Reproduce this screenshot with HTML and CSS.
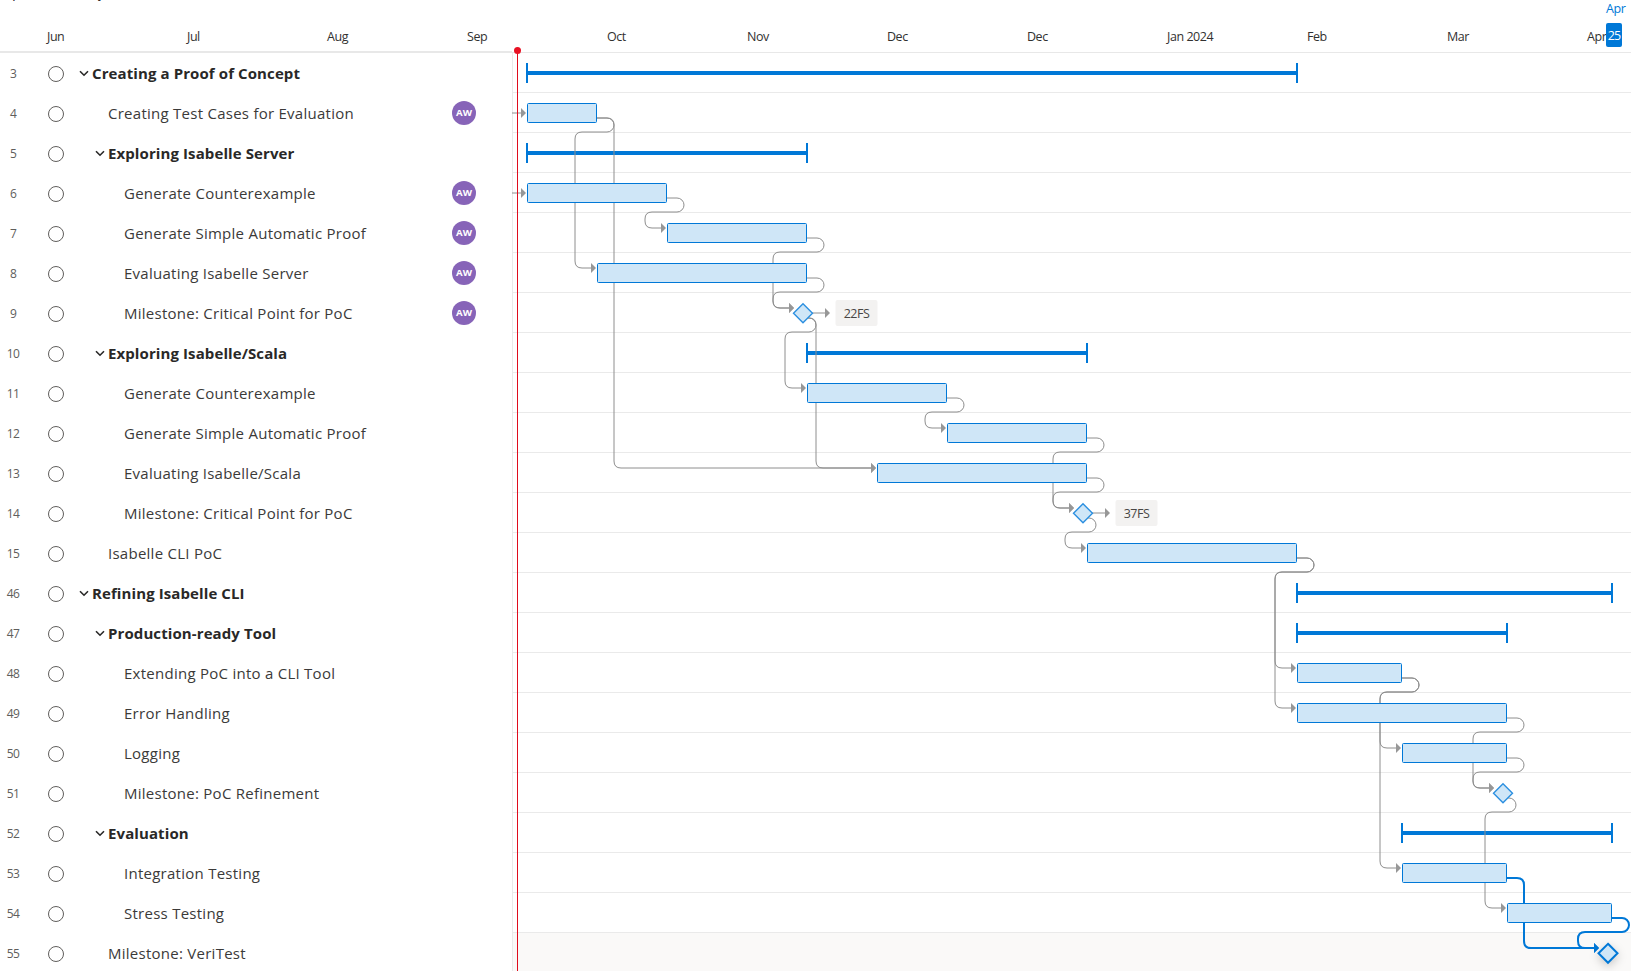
FILE: index.html
```html
<!DOCTYPE html>
<html lang="en">
<head>
<meta charset="utf-8">
<title>Project timeline</title>
<link rel="stylesheet" href="styles.css">
</head>
<body>
<div class="app">
  <header class="axis">
    <span class="clipped">p</span><span class="clipped second">p</span>
    <span class="month">Jun</span><span class="month">Jul</span><span class="month">Aug</span><span class="month">Sep</span><span class="month">Oct</span><span class="month">Nov</span><span class="month">Dec</span><span class="month">Dec</span><span class="month">Jan 2024</span><span class="month">Feb</span><span class="month">Mar</span><span class="month">Apr</span>
    <span class="marker-month">Apr</span><span class="marker-day">25</span>
  </header>
  <main class="board">
    <section class="tasks" id="tasks"></section>
    <section class="chart">
      <svg class="gantt" id="gantt" width="1119" height="918" viewBox="512 53 1119 918"></svg>
    </section>
  </main>
  <div class="today"></div>
</div>
<script src="app.js"></script>
</body>
</html>
```
FILE: styles.css
```css
* { box-sizing: border-box; }
body { margin: 0; background: #fff; color: #323130; font-family: "Open Sans", "Noto Sans", sans-serif; }
.app { position: relative; width: 1631px; height: 971px; overflow: hidden; display: flex; flex-direction: column; }
.axis { position: relative; flex: none; display: flex; align-items: flex-end; height: 53px; padding: 0 0 5px 47px; border-bottom: 1px solid #e8e8e8; overflow: hidden; }
.axis::after { content: ""; position: absolute; left: 0; bottom: 0; width: 512px; height: 1px; background: #e8e8e8; }
.month { flex: 0 0 140px; font-size: 12.5px; line-height: 20px; letter-spacing: -0.45px; color: #323130; white-space: nowrap; }
.clipped { position: absolute; left: 12px; top: -19px; font-size: 15px; line-height: 20px; }
.clipped.second { left: 97px; top: -18px; font-weight: 700; }
.marker-month { position: absolute; left: 1606px; top: -1px; font-size: 12.5px; line-height: 19px; letter-spacing: -0.4px; color: #0078d7; }
.marker-day { position: absolute; left: 1606px; top: 23px; width: 16px; height: 24px; border-radius: 2px; background: #0078d7; color: #fff; font-size: 12.5px; line-height: 25px; letter-spacing: -0.9px; text-align: center; }
.board { flex: 1; display: flex; min-height: 0; }
.tasks { flex: 0 0 512px; }
.chart { flex: 1; }
.gantt { display: block; }
.row { display: flex; align-items: center; height: 40px; padding-top: 2px; }
.num { flex: 0 0 26px; margin-top: -2px; text-align: center; font-size: 12px; letter-spacing: -0.7px; color: #605e5c; }
.check { flex: none; width: 16px; height: 16px; margin-left: 22px; border: 1px solid #605e5c; border-radius: 50%; }
.name { flex: 1; display: flex; align-items: center; margin-top: -2px; font-size: 15px; line-height: 20px; letter-spacing: 0.26px; white-space: nowrap; color: #3b3a39; }
.name svg { flex: none; width: 10px; height: 7px; margin: 0 3px 0 0; }
.l1 { padding-left: 28px; }
.l2 { padding-left: 44px; }
.l3 { padding-left: 60px; }
.summary { font-weight: 700; color: #292827; letter-spacing: 0.1px; }
.summary.l1 { padding-left: 15px; }
.summary.l2 { padding-left: 31px; }
.avatar { flex: none; width: 24px; height: 24px; margin: -2px 36px 0 0; border-radius: 50%; background: #8764b8; color: #fff; font-size: 9.6px; font-weight: 700; line-height: 24px; text-align: center; }
.today { position: absolute; left: 517px; top: 50px; width: 1px; bottom: 0; background: #e00b1c; }
.today::before { content: ""; position: absolute; left: -3px; top: -3px; width: 7px; height: 7px; border-radius: 50%; background: #e81123; }
.grid { stroke: #eaeaea; }
.selected-row { fill: #faf9f8; }
.bar { fill: #cfe6f7; stroke: #0078d7; }
.span { fill: #0078d7; }
.link { fill: none; stroke: #8e8e8e; }
.head { fill: #979797; }
.link.active { stroke: #0078d7; stroke-width: 2; }
.head.active { fill: #0078d7; }
.milestone { fill: #cfe6f7; stroke: #2b8fe0; stroke-width: 1.4; }
.milestone.active { stroke: #0078d7; stroke-width: 2; filter: drop-shadow(0 3px 5px rgba(0, 0, 0, 0.2)); }
.lag { fill: #f3f2f1; }
.lag-text { fill: #484644; font-size: 12.5px; text-anchor: middle; letter-spacing: -0.5px; }
```
FILE: app.js
```js
// Each row: number, name, indent level, is summary, has assignee
const rows = [
  [3, "Creating a Proof of Concept", 1, 1, 0],
  [4, "Creating Test Cases for Evaluation", 2, 0, 1],
  [5, "Exploring Isabelle Server", 2, 1, 0],
  [6, "Generate Counterexample", 3, 0, 1],
  [7, "Generate Simple Automatic Proof", 3, 0, 1],
  [8, "Evaluating Isabelle Server", 3, 0, 1],
  [9, "Milestone: Critical Point for PoC", 3, 0, 1],
  [10, "Exploring Isabelle/Scala", 2, 1, 0],
  [11, "Generate Counterexample", 3, 0, 0],
  [12, "Generate Simple Automatic Proof", 3, 0, 0],
  [13, "Evaluating Isabelle/Scala", 3, 0, 0],
  [14, "Milestone: Critical Point for PoC", 3, 0, 0],
  [15, "Isabelle CLI PoC", 2, 0, 0],
  [46, "Refining Isabelle CLI", 1, 1, 0],
  [47, "Production-ready Tool", 2, 1, 0],
  [48, "Extending PoC into a CLI Tool", 3, 0, 0],
  [49, "Error Handling", 3, 0, 0],
  [50, "Logging", 3, 0, 0],
  [51, "Milestone: PoC Refinement", 3, 0, 0],
  [52, "Evaluation", 2, 1, 0],
  [53, "Integration Testing", 3, 0, 0],
  [54, "Stress Testing", 3, 0, 0],
  [55, "Milestone: VeriTest", 2, 0, 0]
];
const chevron = '<svg viewBox="0 0 10 7"><path d="M1 1.2 5 5.2 9 1.2" fill="none" stroke="#292827" stroke-width="1.6"/></svg>';
document.getElementById("tasks").innerHTML = rows.map(([n, name, level, summary, who]) =>
  `<div class="row"><span class="num">${n}</span><span class="check"></span>` +
  `<span class="name l${level}${summary ? " summary" : ""}">${summary ? chevron : ""}<span>${name}</span></span>` +
  `${who ? '<span class="avatar">AW</span>' : ""}</div>`).join("");

const rowY = n => 53 + 40 * rows.findIndex(r => r[0] === n);
const bars = { 4: [527, 597], 6: [527, 667], 7: [667, 807], 8: [597, 807], 11: [807, 947], 12: [947, 1087], 13: [877, 1087], 15: [1087, 1297], 48: [1297, 1402], 49: [1297, 1507], 50: [1402, 1507], 53: [1402, 1507], 54: [1507, 1612] };
const spans = { 3: [527, 1297], 5: [527, 807], 10: [807, 1087], 46: [1297, 1612], 47: [1297, 1507], 52: [1402, 1612] };
const stones = { 9: 803, 14: 1083, 51: 1503, 55: 1608 };
const links = [[4, 8], [6, 7], [7, 9], [8, 9], [9, 11], [11, 12], [12, 14], [13, 14], [14, 15], [15, 48], [15, 49], [48, 50], [48, 53], [49, 51], [50, 51], [51, 54], [54, 55]];
const drops = [[4, 13], [9, 13], [53, 55]];
const endX = n => bars[n] ? bars[n][1] : stones[n] - 4;
const startX = n => bars[n] ? bars[n][0] : stones[n] - 8;
const head = (x, y, cls) => `<path class="head${cls}" d="M${x - 6} ${y - 5} ${x - 1} ${y} ${x - 6} ${y + 5}z"/>`;

let out = `<rect class="selected-row" x="512" y="933" width="1119" height="40"/>`;
for (let i = 1; i < rows.length; i++) out += `<path class="grid" d="M512 ${52.5 + 40 * i - 0}H1631"/>`;
out += `<path class="grid" d="M512.5 53V971"/>`;
for (const n in spans) {
  const [a, b] = spans[n], y = rowY(+n);
  out += `<path class="span" d="M${a - 1} ${y + 10}h2v8H${b - 1}v-8h2v20h-2v-8H${a + 1}v8h-2z"/>`;
}
for (const [a, b] of links) {
  const cls = b === 55 ? " active" : "", x = endX(a), y = rowY(a) + 25, r = x + 17, s = startX(b), t = rowY(b) + 15;
  out += `<path class="link${cls}" d="M${x} ${y}H${r - 7}a7 7 0 0 1 0 14H${s - 15}q-7 0-7 7V${t - 7}q0 7 7 7H${s - 5}"/>` + head(s, t, cls);
}
for (const [a, b] of drops) {
  const cls = b === 55 ? " active" : "", x = endX(a), y = rowY(a) + 25, r = x + 17, s = startX(b), t = rowY(b) + 15;
  out += `<path class="link${cls}" d="M${x} ${y}H${r - 7}q7 0 7 7V${t - 7}q0 7 7 7H${s - 5}"/>` + head(s, t, cls);
}
for (const y of [113, 193]) out += `<path class="link" d="M512 ${y}H522"/>` + head(527, y, "");
for (const n in bars) {
  const [a, b] = bars[n];
  out += `<rect class="bar" x="${a + .5}" y="${rowY(+n) + 10.5}" width="${b - a - 1}" height="19" rx="1"/>`;
}
for (const [n, text] of [[9, "22FS"], [14, "37FS"]]) {
  const x = stones[n], y = rowY(n) + 20;
  out += `<path class="link" d="M${x + 9} ${y}H${x + 23}"/>` + head(x + 28, y, "");
  out += `<rect class="lag" x="${x + 32.5}" y="${y - 13}" width="42" height="26" rx="2"/><text class="lag-text" x="${x + 53.5}" y="${y + 5}">${text}</text>`;
}
for (const n in stones) {
  const x = stones[n], y = rowY(+n) + 20.3;
  out += `<path class="milestone${n === "55" ? " active" : ""}" d="M${x} ${y - 9.5} ${x + 9.5} ${y} ${x} ${y + 9.5} ${x - 9.5} ${y}z"/>`;
}
document.getElementById("gantt").innerHTML = out;
```
